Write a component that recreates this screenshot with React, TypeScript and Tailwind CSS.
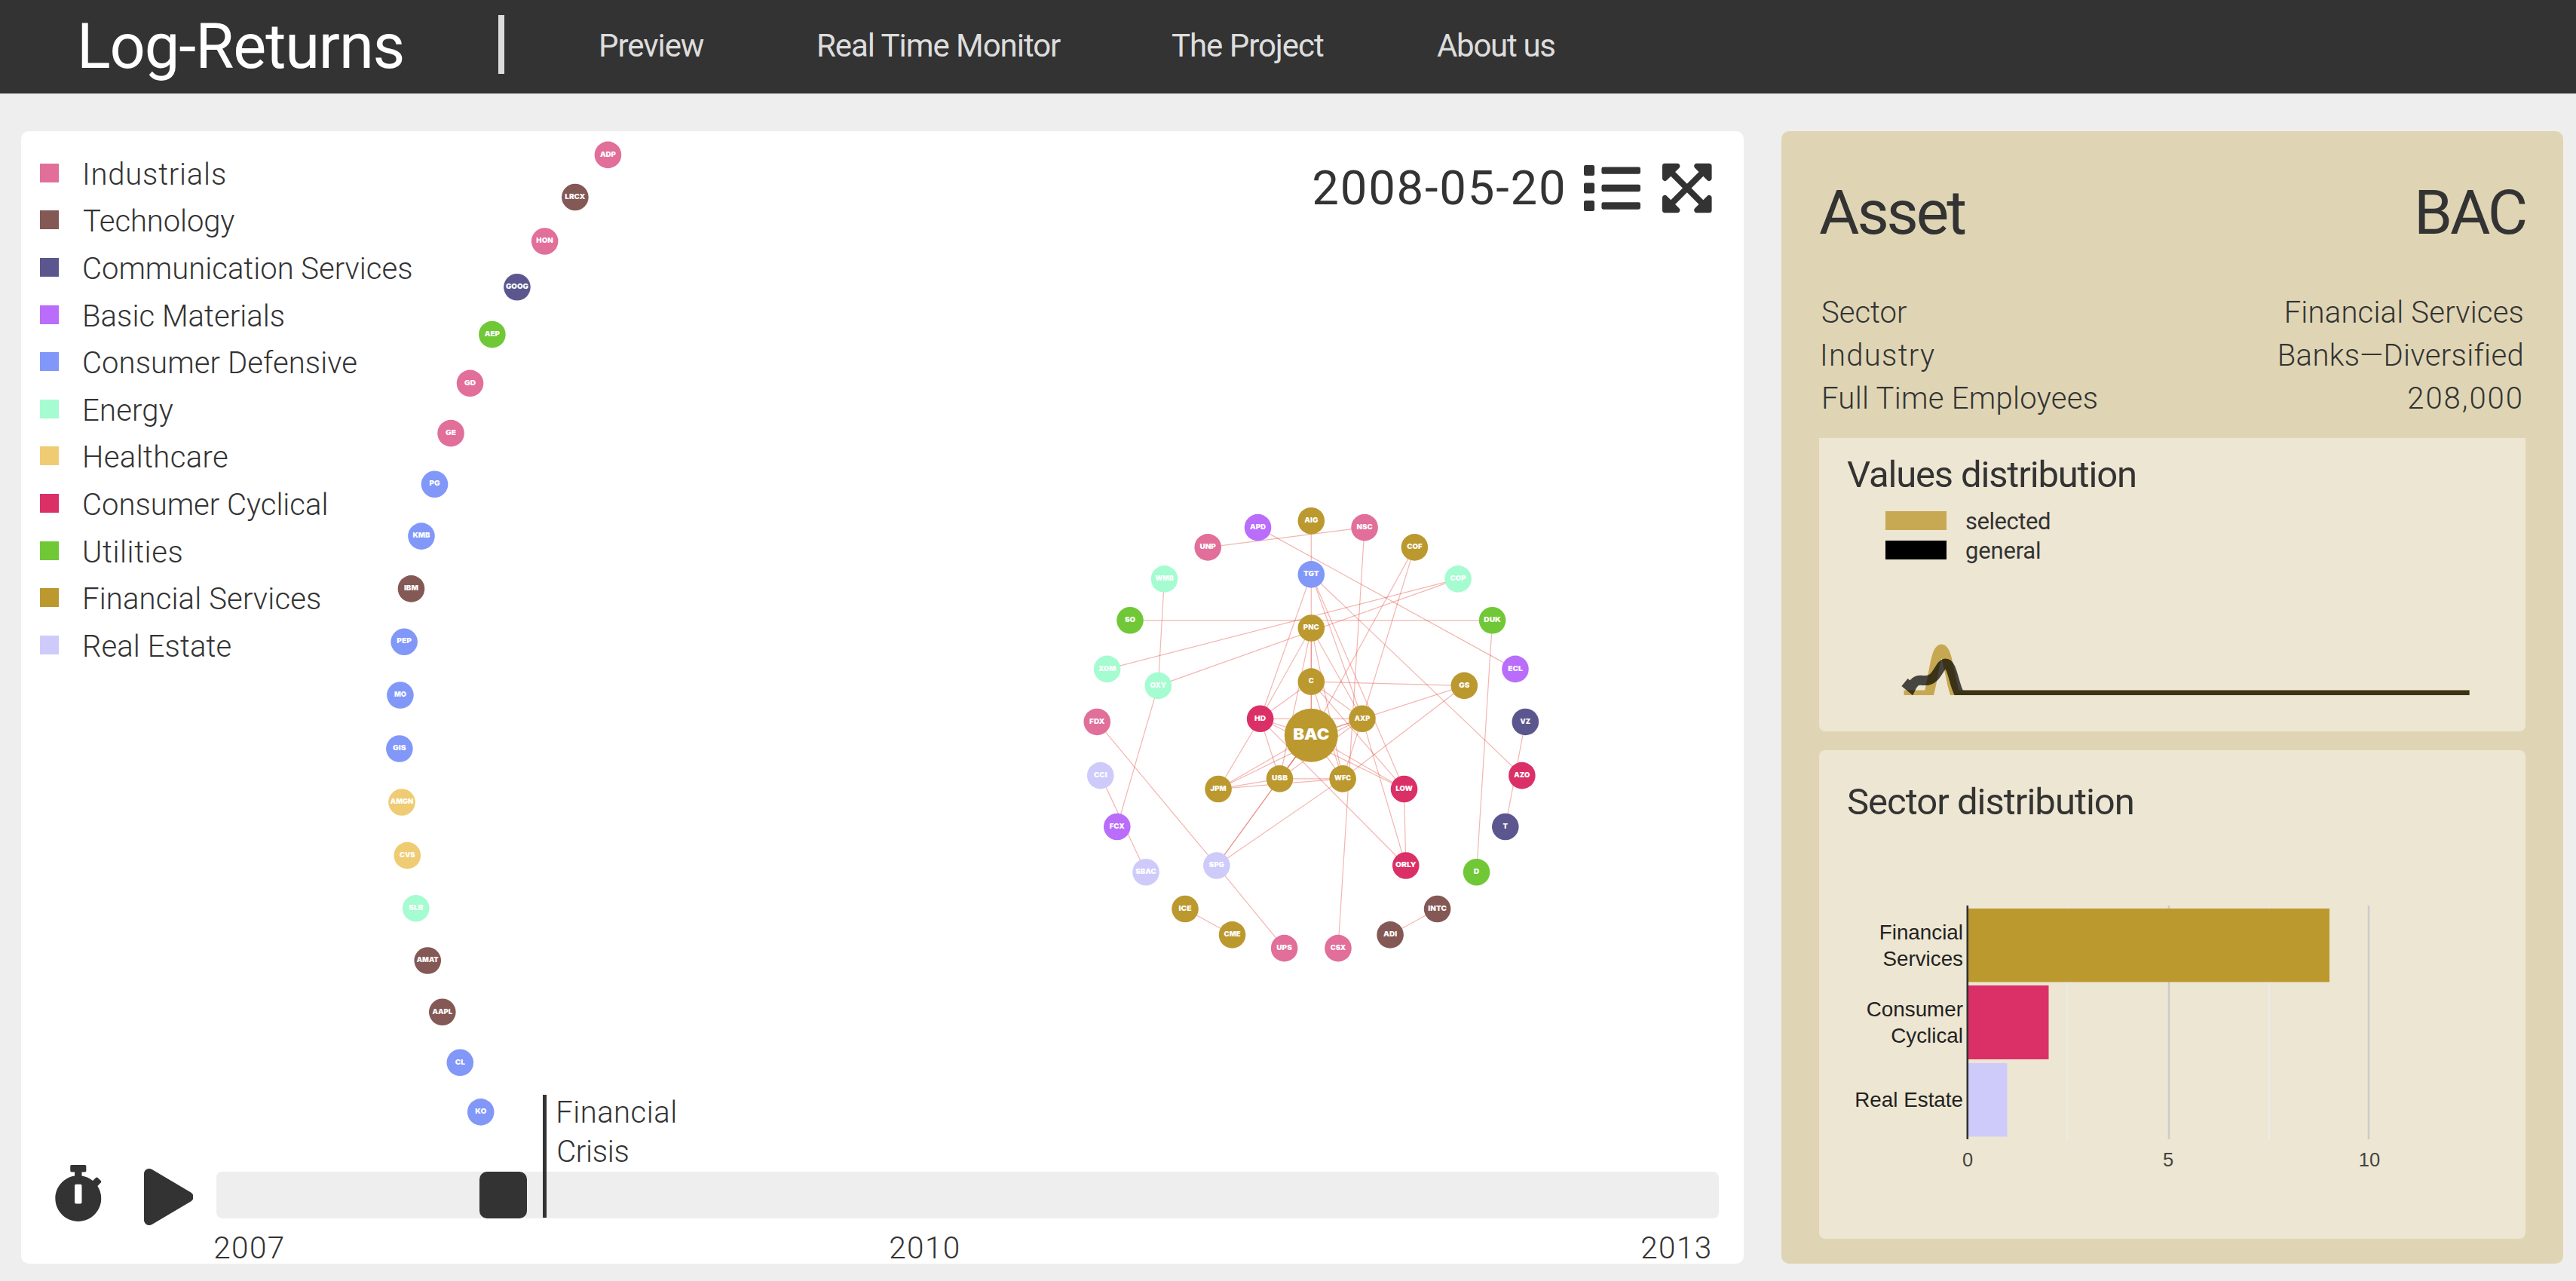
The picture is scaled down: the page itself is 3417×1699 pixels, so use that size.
import { FaExpandArrowsAlt, FaList, FaPlay, FaStopwatch } from "react-icons/fa";

const C = {
  industrials: "#e16f99",
  technology: "#835855",
  communication: "#5b578e",
  materials: "#b96dfa",
  defensive: "#8198f9",
  energy: "#a5fcd0",
  healthcare: "#efcc74",
  cyclical: "#db3067",
  utilities: "#70c837",
  financial: "#bb992f",
  realEstate: "#cecbfb",
};

const sectors: { name: string; swatch: string; tracking: string }[] = [
  { name: "Industrials", swatch: "bg-[#e16f99]", tracking: "tracking-[0.8px] pl-[31px]" },
  { name: "Technology", swatch: "bg-[#835855]", tracking: "tracking-[-0.1px] pl-[32px]" },
  { name: "Communication Services", swatch: "bg-[#5b578e]", tracking: "pl-[31px]" },
  { name: "Basic Materials", swatch: "bg-[#b96dfa]", tracking: "tracking-[0.05px] pl-[31px]" },
  { name: "Consumer Defensive", swatch: "bg-[#8198f9]", tracking: "tracking-[0.1px] pl-[31px]" },
  { name: "Energy", swatch: "bg-[#a5fcd0]", tracking: "tracking-[0.2px] pl-[31px]" },
  { name: "Healthcare", swatch: "bg-[#efcc74]", tracking: "tracking-[0.4px] pl-[31px]" },
  { name: "Consumer Cyclical", swatch: "bg-[#db3067]", tracking: "pl-[31px]" },
  { name: "Utilities", swatch: "bg-[#70c837]", tracking: "tracking-[0.6px] pl-[31px]" },
  { name: "Financial Services", swatch: "bg-[#bb992f]", tracking: "tracking-[0.15px] pl-[31px]" },
  { name: "Real Estate", swatch: "bg-[#cecbfb]", tracking: "tracking-[0.1px] pl-[31px]" },
];

type Node = { id: string; x: number; y: number; color: string };

const CX = 1739.3;
const CY = 975.3;
const STEP = 71.15;

// Places `items` on a ring of `slots` evenly spaced positions, clockwise from the top.
function ring(level: number, slots: number, start: number, items: [string, string][]): Node[] {
  return items.map(([id, color], i) => {
    const a = ((start + i) * 2 * Math.PI) / slots;
    return { id, color, x: CX + Math.sin(a) * STEP * level, y: CY - Math.cos(a) * STEP * level };
  });
}

const nodes: Node[] = [
  ...ring(1, 5, 0, [
    ["C", C.financial],
    ["AXP", C.financial],
    ["WFC", C.financial],
    ["USB", C.financial],
    ["HD", C.cyclical],
  ]),
  ...ring(2, 3, 0, [
    ["PNC", C.financial],
    ["LOW", C.cyclical],
    ["JPM", C.financial],
  ]),
  ...ring(3, 5, 0, [
    ["TGT", C.defensive],
    ["GS", C.financial],
    ["ORLY", C.cyclical],
    ["SPG", C.realEstate],
    ["OXY", C.energy],
  ]),
  ...ring(4, 25, 0, [
    ["AIG", C.financial],
    ["NSC", C.industrials],
    ["COF", C.financial],
    ["COP", C.energy],
    ["DUK", C.utilities],
    ["ECL", C.materials],
    ["VZ", C.communication],
    ["AZO", C.cyclical],
    ["T", C.communication],
    ["D", C.utilities],
    ["INTC", C.technology],
    ["ADI", C.technology],
    ["CSX", C.industrials],
    ["UPS", C.industrials],
    ["CME", C.financial],
    ["ICE", C.financial],
    ["SBAC", C.realEstate],
    ["FCX", C.materials],
    ["CCI", C.realEstate],
    ["FDX", C.industrials],
    ["XOM", C.energy],
    ["SO", C.utilities],
    ["WMB", C.energy],
    ["UNP", C.industrials],
    ["APD", C.materials],
  ]),
  ...ring(17, 107, 73, [
    ["KO", C.defensive],
    ["CL", C.defensive],
    ["AAPL", C.technology],
    ["AMAT", C.technology],
    ["SLB", C.energy],
    ["CVS", C.healthcare],
    ["AMGN", C.healthcare],
    ["GIS", C.defensive],
    ["MO", C.defensive],
    ["PEP", C.defensive],
    ["IBM", C.technology],
    ["KMB", C.defensive],
    ["PG", C.defensive],
    ["GE", C.industrials],
    ["GD", C.industrials],
    ["AEP", C.utilities],
    ["GOOG", C.communication],
    ["HON", C.industrials],
    ["LRCX", C.technology],
    ["ADP", C.industrials],
  ]),
];

const edges =
  "UNP-NSC APD-ECL AIG-BAC PNC-C C-BAC TGT-HD TGT-AXP TGT-LOW TGT-AZO PNC-USB PNC-HD PNC-WFC PNC-AXP OXY-COP XOM-COP " +
  "COF-AXP COF-BAC NSC-CSX C-GS C-HD C-AXP C-WFC C-LOW HD-AXP HD-BAC HD-LOW HD-JPM HD-USB HD-ORLY AXP-BAC AXP-JPM AXP-USB AXP-WFC " +
  "AXP-ORLY SPG-BAC SPG-BAC SPG-WFC GS-BAC GS-WFC LOW-BAC LOW-ORLY JPM-BAC JPM-WFC JPM-USB USB-WFC USB-BAC WFC-BAC FDX-SPG " +
  "SPG-UPS WMB-OXY OXY-FCX CCI-SBAC ICE-CME INTC-ADI VZ-T DUK-D SO-DUK";

// Advance widths (em) of the wide black face used for ticker labels.
const EM: Record<string, number> = {
  A: 0.778, B: 0.778, C: 0.778, D: 0.833, E: 0.722, F: 0.667, G: 0.833, H: 0.833, I: 0.389, J: 0.667,
  K: 0.833, L: 0.667, M: 0.944, N: 0.833, O: 0.833, P: 0.722, R: 0.778, S: 0.722, T: 0.722, U: 0.833,
  V: 0.778, W: 1, X: 0.778, Y: 0.778, Z: 0.722,
};

function labelWidth(text: string, size: number) {
  return [...text].reduce((sum, ch) => sum + EM[ch], 0) * size;
}

function Network() {
  const at = new Map<string, { x: number; y: number }>(nodes.map((n) => [n.id, n]));
  at.set("BAC", { x: CX, y: CY });
  return (
    <svg className="absolute inset-0 h-full w-full" viewBox="28 174 2285 1502">
      <g stroke="#e03c30" strokeOpacity="0.38" strokeWidth="1.2">
        {edges.split(" ").map((e, i) => {
          const [a, b] = e.split("-").map((id) => at.get(id)!);
          return <line key={i} x1={a.x} y1={a.y} x2={b.x} y2={b.y} />;
        })}
      </g>
      <g fill="#fff" textAnchor="middle" className="font-['Inter',sans-serif] font-black">
        {nodes.map((n) => (
          <g key={n.id}>
            <circle cx={n.x} cy={n.y} r="17.8" fill={n.color} />
            <text x={n.x} y={n.y + 2.2} fontSize="9" textLength={labelWidth(n.id, 9)} lengthAdjust="spacingAndGlyphs">
              {n.id}
            </text>
          </g>
        ))}
        <circle cx={CX} cy={CY} r="35.5" fill={C.financial} />
        <text x={CX} y={CY + 5.4} fontSize="20.5" textLength={48} lengthAdjust="spacingAndGlyphs">
          BAC
        </text>
      </g>
    </svg>
  );
}

function Header() {
  return (
    <header className="flex h-[124px] items-center bg-[#333333]">
      <h1 className="w-[560px] pl-[102px] text-[83px] leading-[100px] tracking-[-1.1px] text-white">Log-Returns</h1>
      <div className="mb-[6px] ml-[101px] h-[78px] w-[8px] bg-[#dddddd]" />
      <nav className="flex pb-[3px] text-[42px] leading-[50px] tracking-[-1.05px] whitespace-nowrap text-[#dddddd]">
        <a className="ml-[125px] w-[289px]">Preview</a>
        <a className="w-[471px]">Real Time Monitor</a>
        <a className="w-[352px]">The Project</a>
        <a className="tracking-[-1.3px]">About us</a>
      </nav>
    </header>
  );
}

function Timeline() {
  return (
    <div className="flex h-[122px]">
      <FaStopwatch className="-mt-[9px] ml-[43px] h-[75px] w-[65.6px] shrink-0" />
      <FaPlay className="-mt-[4px] ml-[54px] h-[75px] w-[65.6px] shrink-0" />
      <div className="ml-[31px] w-[1993px]">
        <div className="relative h-[62px] rounded-[8px] bg-[#eeeeee]">
          <div className="ml-[349px] h-[62px] w-[63px] rounded-[10px] bg-[#333333]" />
          <div className="absolute bottom-[1px] left-[433px] flex h-[163px] border-l-[5px] border-[#333333] pl-[12px] text-[40px] leading-[52px] font-light">
            <div className="-mt-[2px]">
              <p className="tracking-[0.5px]">Financial</p>
              <p className="pl-[1px] tracking-[-0.3px]">Crisis</p>
            </div>
          </div>
        </div>
        <div className="mt-[17px] -ml-[4px] flex text-[40.5px] leading-[44px] font-light tracking-[1.4px]">
          <span className="w-[896px]">2007</span>
          <span className="w-[997px]">2010</span>
          <span>2013</span>
        </div>
      </div>
    </div>
  );
}

function NetworkPanel() {
  return (
    <section className="relative flex h-[1502px] w-[2285px] flex-col justify-between rounded-[10px] bg-white">
      <Network />
      <div className="relative flex justify-between">
        <ul className="pt-[24px] pl-[25px]">
          {sectors.map((s) => (
            <li key={s.name} className="flex h-[62.6px] items-center">
              <span className={"h-[25px] w-[25px] " + s.swatch} />
              <span className={"mt-[5px] text-[40px] leading-[50px] font-light " + s.tracking}>{s.name}</span>
            </li>
          ))}
        </ul>
        <div className="flex h-[113px] items-end pr-[42px]">
          <span className="mr-[23px] mb-px text-[63.5px] leading-[73px] tracking-[1.75px]">2008-05-20</span>
          <FaList className="mr-[29px] h-[75px] w-[75px]" />
          <FaExpandArrowsAlt className="h-[75px] w-[65.6px]" />
        </div>
      </div>
      <Timeline />
    </section>
  );
}

function ValuesChart() {
  return (
    <svg className="mt-[1px] block h-[221px] w-[937px]" viewBox="2413 749 937 221">
      <clipPath id="plot">
        <rect x="2500" y="749" width="775.6" height="172" />
      </clipPath>
      <g fill="none" strokeWidth="13" clipPath="url(#plot)">
        <path
          d="M2525.5 921H2558C2564 905 2567 860 2575.3 860S2587 905 2594 921H3276"
          stroke="#bb992f"
          strokeOpacity="0.8"
        />
        <path
          d="M2526.5 904L2535 911C2541 899 2546 901.5 2553 901.5C2570 903 2572 879 2581 879C2590 879 2592 910 2600 921H3276"
          stroke="#000"
          strokeOpacity="0.7"
        />
      </g>
    </svg>
  );
}

function SectorChart() {
  return (
    <svg className="block h-[549px] w-[937px] font-['Liberation_Sans',sans-serif]" viewBox="2413 1094 937 549">
      <g strokeWidth="2">
        <path d="M2742 1201V1511M3010 1201V1511" stroke="#ebebeb" />
        <path d="M2877 1201V1511M3142 1201V1511" stroke="#cccccc" strokeWidth="2.6" />
      </g>
      <rect x="2610" y="1205" width="480" height="97.5" fill="#bb992f" />
      <rect x="2610" y="1307" width="107.5" height="98" fill="#db3067" />
      <rect x="2610" y="1410" width="52.5" height="97.5" fill="#cecbfb" />
      <rect x="2608.5" y="1201" width="2.6" height="310" fill="#333333" />
      <g fill="#222222" fontSize="27.8" textAnchor="end">
        <text x="2604" y="1246">Financial</text>
        <text x="2604" y="1281">Services</text>
        <text x="2604" y="1348">Consumer</text>
        <text x="2604" y="1383">Cyclical</text>
        <text x="2604" y="1468">Real Estate</text>
      </g>
      <g fill="#444444" fontSize="25.5" textAnchor="middle">
        <text x="2610" y="1547">0</text>
        <text x="2876" y="1547">5</text>
        <text x="3143" y="1547">10</text>
      </g>
    </svg>
  );
}

const facts = [
  { label: "Sector", value: "Financial Services", left: "", right: "tracking-[0.2px]" },
  { label: "Industry", value: "Banks—Diversified", left: "-ml-[2px] tracking-[1.3px]", right: "tracking-[0.34px]" },
  { label: "Full Time Employees", value: "208,000", left: "tracking-[0.3px]", right: "tracking-[2px]" },
];

function AssetPanel() {
  return (
    <aside className="ml-[50px] h-[1502px] w-[1037px] rounded-[10px] bg-[#dfd5b4] px-[50px] pt-[57px]">
      <div className="flex h-[101px] items-center justify-between text-[82px] leading-[100px]">
        <h2 className="tracking-[-3.1px]">Asset</h2>
        <span className="tracking-[-3.2px]">BAC</span>
      </div>
      <dl className="mt-[54px] text-[40px] leading-[57.2px] font-light">
        {facts.map((f) => (
          <div key={f.label} className="flex justify-between pr-[2px] pl-[3px]">
            <dt className={f.left}>{f.label}</dt>
            <dd className={f.right}>{f.value}</dd>
          </div>
        ))}
      </dl>
      <section className="mt-[23.4px] flex h-[389px] flex-col rounded-b-[8px] bg-[#ede6d2]">
        <h3 className="mt-[19px] pl-[37px] text-[49px] leading-[60px] tracking-[-1.16px]">Values distribution</h3>
        <ul className="mt-[11px] pl-[88px] text-[31px] leading-[39px]">
          <li className="flex h-[39px] items-center">
            <span className="mr-[25px] h-[25px] w-[81px] bg-[#c7a953]" />
            <span className="mt-[2px] tracking-[-0.46px]">selected</span>
          </li>
          <li className="flex h-[39px] items-center">
            <span className="mr-[25px] h-[25px] w-[81px] bg-black" />
            <span className="mt-[2px] tracking-[-0.19px]">general</span>
          </li>
        </ul>
        <div className="mt-auto">
          <ValuesChart />
        </div>
      </section>
      <section className="mt-[25px] h-[648px] rounded-[8px] bg-[#ede6d2]">
        <h3 className="pt-[39px] pl-[37px] text-[49px] leading-[60px] tracking-[-1px]">Sector distribution</h3>
        <SectorChart />
      </section>
    </aside>
  );
}

export default function App() {
  return (
    <div className="h-[1699px] w-[3417px] overflow-hidden bg-[#eeeeee] font-['Roboto',sans-serif] text-[#333333]">
      <Header />
      <main className="flex pt-[50px] pl-[28px]">
        <NetworkPanel />
        <AssetPanel />
      </main>
    </div>
  );
}
